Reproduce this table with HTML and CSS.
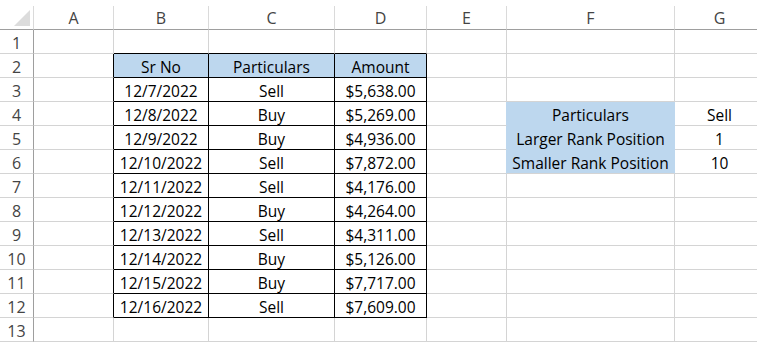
FILE: index.html
```html
<!DOCTYPE html>
<html>
<head>
<meta charset="utf-8">
<link rel="stylesheet" href="styles.css">
</head>
<body>
<div class="sheet">
  <div class="cell colhead corner"><div class="tri"></div></div>
  <div class="cell colhead">A</div>
  <div class="cell colhead">B</div>
  <div class="cell colhead">C</div>
  <div class="cell colhead">D</div>
  <div class="cell colhead">E</div>
  <div class="cell colhead">F</div>
  <div class="cell colhead">G</div>

  <div class="cell rowhead">1</div>
  <div class="cell"></div>
  <div class="cell tb-top"></div>
  <div class="cell tb-top"></div>
  <div class="cell tb-top"></div>
  <div class="cell"></div>
  <div class="cell"></div>
  <div class="cell"></div>

  <div class="cell rowhead">2</div>
  <div class="cell tb-left"></div>
  <div class="cell tb blue">Sr No</div>
  <div class="cell tb blue">Particulars</div>
  <div class="cell tb blue">Amount</div>
  <div class="cell"></div>
  <div class="cell"></div>
  <div class="cell"></div>

  <div class="cell rowhead">3</div>
  <div class="cell tb-left"></div>
  <div class="cell tb">12/7/2022</div>
  <div class="cell tb">Sell</div>
  <div class="cell tb">$5,638.00</div>
  <div class="cell"></div>
  <div class="cell"></div>
  <div class="cell"></div>

  <div class="cell rowhead">4</div>
  <div class="cell tb-left"></div>
  <div class="cell tb">12/8/2022</div>
  <div class="cell tb">Buy</div>
  <div class="cell tb">$5,269.00</div>
  <div class="cell before-blue"></div>
  <div class="cell blue fill-mid">Particulars</div>
  <div class="cell">Sell</div>

  <div class="cell rowhead">5</div>
  <div class="cell tb-left"></div>
  <div class="cell tb">12/9/2022</div>
  <div class="cell tb">Buy</div>
  <div class="cell tb">$4,936.00</div>
  <div class="cell before-blue"></div>
  <div class="cell blue fill-mid">Larger Rank Position</div>
  <div class="cell">1</div>

  <div class="cell rowhead">6</div>
  <div class="cell tb-left"></div>
  <div class="cell tb">12/10/2022</div>
  <div class="cell tb">Sell</div>
  <div class="cell tb">$7,872.00</div>
  <div class="cell before-blue"></div>
  <div class="cell blue fill-end">Smaller Rank Position</div>
  <div class="cell">10</div>

  <div class="cell rowhead">7</div>
  <div class="cell tb-left"></div>
  <div class="cell tb">12/11/2022</div>
  <div class="cell tb">Sell</div>
  <div class="cell tb">$4,176.00</div>
  <div class="cell"></div>
  <div class="cell"></div>
  <div class="cell"></div>

  <div class="cell rowhead">8</div>
  <div class="cell tb-left"></div>
  <div class="cell tb">12/12/2022</div>
  <div class="cell tb">Buy</div>
  <div class="cell tb">$4,264.00</div>
  <div class="cell"></div>
  <div class="cell"></div>
  <div class="cell"></div>

  <div class="cell rowhead">9</div>
  <div class="cell tb-left"></div>
  <div class="cell tb">12/13/2022</div>
  <div class="cell tb">Sell</div>
  <div class="cell tb">$4,311.00</div>
  <div class="cell"></div>
  <div class="cell"></div>
  <div class="cell"></div>

  <div class="cell rowhead">10</div>
  <div class="cell tb-left"></div>
  <div class="cell tb">12/14/2022</div>
  <div class="cell tb">Buy</div>
  <div class="cell tb">$5,126.00</div>
  <div class="cell"></div>
  <div class="cell"></div>
  <div class="cell"></div>

  <div class="cell rowhead">11</div>
  <div class="cell tb-left"></div>
  <div class="cell tb">12/15/2022</div>
  <div class="cell tb">Buy</div>
  <div class="cell tb">$7,717.00</div>
  <div class="cell"></div>
  <div class="cell"></div>
  <div class="cell"></div>

  <div class="cell rowhead">12</div>
  <div class="cell tb-left"></div>
  <div class="cell tb">12/16/2022</div>
  <div class="cell tb">Sell</div>
  <div class="cell tb">$7,609.00</div>
  <div class="cell"></div>
  <div class="cell"></div>
  <div class="cell"></div>

  <div class="cell rowhead">13</div>
  <div class="cell"></div>
  <div class="cell"></div>
  <div class="cell"></div>
  <div class="cell"></div>
  <div class="cell"></div>
  <div class="cell"></div>
  <div class="cell"></div>
</div>
</body>
</html>
```

FILE: styles.css
```css
html, body {
  margin: 0;
  padding: 0;
  background: #ffffff;
  overflow: hidden;
}

body {
  width: 757px;
  height: 344px;
}

.sheet {
  margin-top: 6px;
  display: grid;
  grid-template-columns: 34px 80px 95px 126px 92px 80px 168px 90px;
  grid-template-rows: 24px repeat(13, 24px);
  font-family: "Open Sans", "Noto Sans", sans-serif;
  font-size: 15.5px;
  color: #000;
}

.cell {
  box-sizing: border-box;
  border-right: 1px solid #d4d4d4;
  border-bottom: 1px solid #d4d4d4;
  display: flex;
  align-items: center;
  justify-content: center;
  padding-top: 2px;
  white-space: nowrap;
  overflow: hidden;
}

.colhead {
  border-bottom-color: #9e9e9e;
  border-right-color: #dadada;
  color: #444;
  font-size: 16px;
  padding-top: 0;
}

.corner {
  align-items: flex-end;
  justify-content: flex-end;
  padding: 0 3px 3px 0;
}

.tri {
  width: 16px;
  height: 16px;
  background: #dcdcdc;
  clip-path: polygon(100% 0, 100% 100%, 0 100%);
}

.rowhead {
  border-right-color: #9e9e9e;
  color: #444;
  font-size: 16px;
}

.tb-top {
  border-bottom-color: #000;
}

.tb-left {
  border-right-color: #000;
}

.tb {
  border-right-color: #000;
  border-bottom-color: #000;
}

.blue {
  background: #bdd7ee;
}

.before-blue {
  border-right-color: #bdd7ee;
}

.fill-mid {
  border-right-color: #bdd7ee;
  border-bottom-color: #bdd7ee;
}

.fill-end {
  border-right-color: #bdd7ee;
}
```
